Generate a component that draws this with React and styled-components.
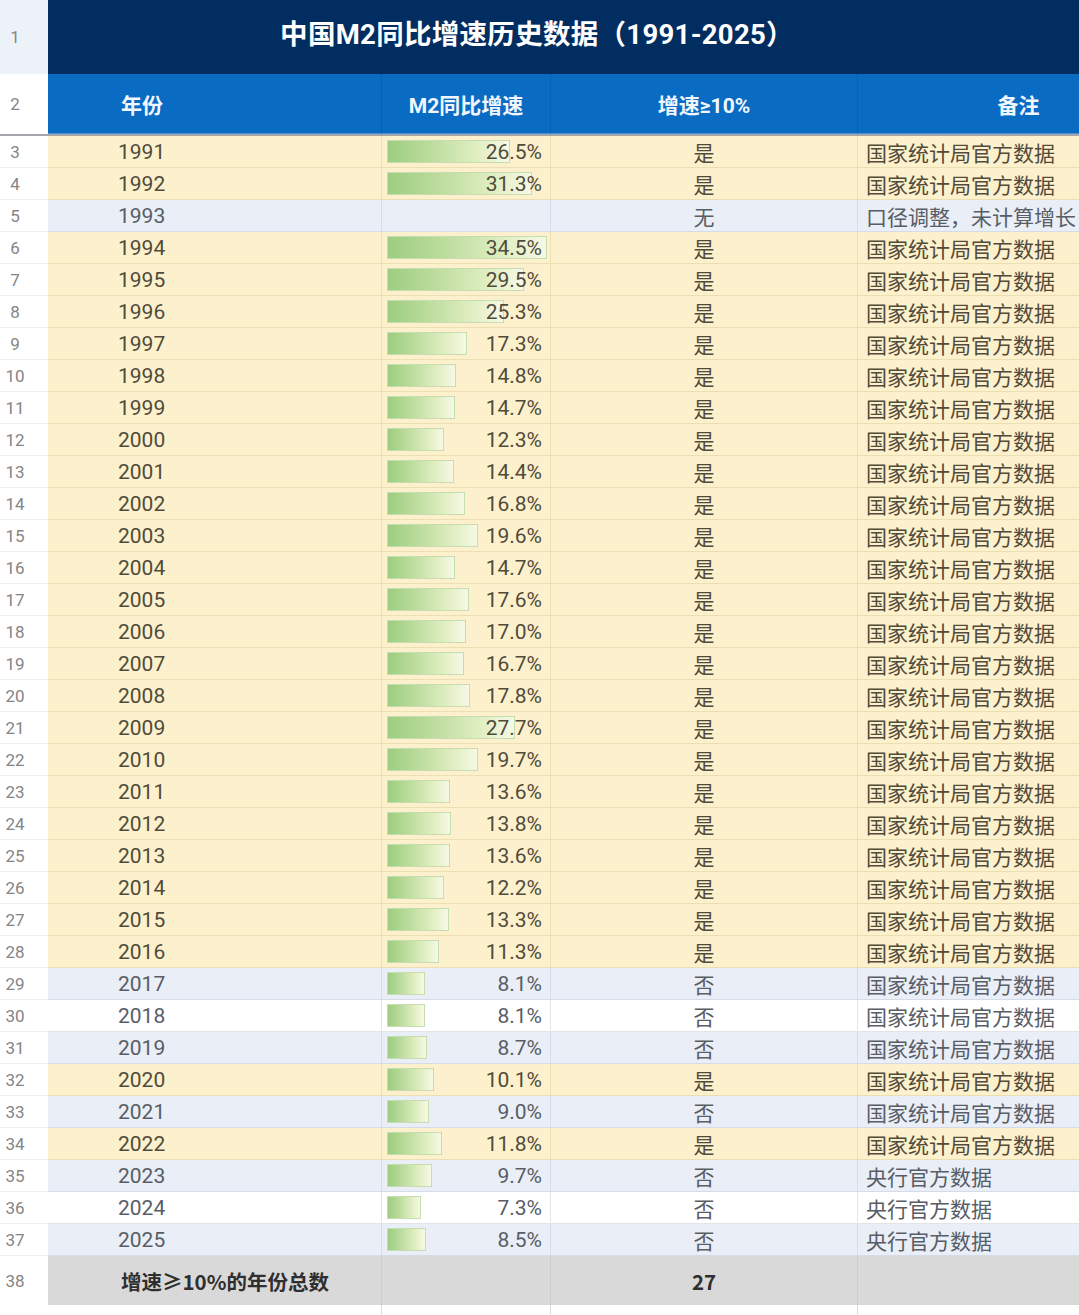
import React from 'react'
import styled, { createGlobalStyle } from 'styled-components'

const GlobalStyle = createGlobalStyle`
  html, body { margin: 0; padding: 0; background: #fff; }
  body {
    font-family: Roboto, "Noto Sans CJK SC", sans-serif;
    overflow: hidden;
  }
  * { box-sizing: border-box; }
`

const NBS = '国家统计局官方数据'
const PBC = '央行官方数据'

const rows = [
  [1991, 26.5], [1992, 31.3], [1993, null, '无', '口径调整，未计算增长'],
  [1994, 34.5], [1995, 29.5], [1996, 25.3], [1997, 17.3], [1998, 14.8],
  [1999, 14.7], [2000, 12.3], [2001, 14.4], [2002, 16.8], [2003, 19.6],
  [2004, 14.7], [2005, 17.6], [2006, 17.0], [2007, 16.7], [2008, 17.8],
  [2009, 27.7], [2010, 19.7], [2011, 13.6], [2012, 13.8], [2013, 13.6],
  [2014, 12.2], [2015, 13.3], [2016, 11.3], [2017, 8.1], [2018, 8.1],
  [2019, 8.7], [2020, 10.1], [2021, 9.0], [2022, 11.8],
  [2023, 9.7, null, PBC], [2024, 7.3, null, PBC], [2025, 8.5, null, PBC],
]

const MAX = 34.5
const BAR_MAX = 160

const tones = {
  yes: { bg: '#fdf1cd', line: '#eddfb4', text: '#504b3b' },
  blue: { bg: '#e9eef7', line: '#d5dce7', text: '#585d66' },
  white: { bg: '#ffffff', line: '#e2e4e8', text: '#585d66' },
}

const COLS = '48px 334px 169px 307px 322px'

const Sheet = styled.div`
  width: 1079px;
  height: 1315px;
  overflow: hidden;
  background: #fff;
`

const Row = styled.div`
  display: grid;
  grid-template-columns: ${COLS};
  width: 1180px;
  height: ${p => p.$h}px;
`

const RowNum = styled.div`
  display: flex;
  align-items: center;
  justify-content: center;
  padding-right: 18px;
  font-size: 17px;
  color: #858585;
  background: ${p => p.$bg || '#fff'};
  border-bottom: ${p => p.$line ? `1px solid ${p.$line}` : 'none'};
`

const TitleCell = styled.div`
  grid-column: 2 / -1;
  display: flex;
  align-items: center;
  justify-content: center;
  padding: 0 154px 10px 0;
  background: #022d61;
  color: #fff;
  font-size: 27.5px;
  font-weight: 700;
  letter-spacing: 0.3px;
`

const HeadRow = styled(Row)`
  border-bottom: 2px solid #a3a7ad;
`

const HeadCell = styled.div`
  display: flex;
  align-items: center;
  justify-content: ${p => p.$left ? 'flex-start' : 'center'};
  padding-left: ${p => p.$left ? '73px' : '0'};
  background: #0a6bc3;
  border-right: 1px solid #0a60b0;
  border-bottom: 1px solid #4a90d4;
  color: #f2f7ff;
  font-size: 21px;
  font-weight: 700;
`

const Cell = styled.div`
  position: relative;
  display: flex;
  align-items: center;
  justify-content: ${p => p.$align === 'center' ? 'center' : p.$align === 'right' ? 'flex-end' : 'flex-start'};
  padding: 0 ${p => p.$pr || 0}px 0 ${p => p.$pl || 0}px;
  background: ${p => p.$tone.bg};
  border-right: 1px solid ${p => p.$tone.line};
  border-bottom: 1px solid ${p => p.$tone.line};
  color: ${p => p.$tone.text};
  font-size: 21px;
  white-space: nowrap;
  overflow: hidden;
`

const Note = styled.span`
  font-family: "Noto Sans CJK SC", sans-serif;
  font-size: 21px;
`

const Bar = styled.div`
  position: absolute;
  left: 5px;
  top: 4px;
  bottom: 4px;
  background: linear-gradient(to right, #9dcd80 0%, #bcdc9d 35%, #e2efc4 75%, #f6f9e6 100%);
  border: 1px solid #c6ddb0;
`

const Value = styled.span`
  position: relative;
  z-index: 1;
`

const TotalCell = styled.div`
  display: flex;
  align-items: center;
  justify-content: ${p => p.$center ? 'center' : 'flex-start'};
  padding-left: ${p => p.$center ? '0' : '73px'};
  background: #d9d9d9;
  border-right: 1px solid #cdcdcd;
  color: #2f2f2f;
  font-family: "Noto Sans CJK SC", sans-serif;
  font-size: 20.5px;
  font-weight: 700;
`

const TailCell = styled.div`
  background: #fff;
  border-right: 1px solid #dcdcdc;
`

const DataRow = ({ num, year, value, flag, note }) => {
  const f = flag || (value >= 10 ? '是' : '否')
  const tone = f === '是' ? tones.yes : num % 2 === 1 ? tones.blue : tones.white
  return (
    <Row $h={32}>
      <RowNum $line="#eceef1">{num}</RowNum>
      <Cell $tone={tone} $pl={70}>{year}</Cell>
      <Cell $tone={tone} $align="right" $pr={8}>
        {value != null && <Bar style={{ width: `${(value / MAX) * BAR_MAX}px` }} />}
        {value != null && <Value>{value.toFixed(1)}%</Value>}
      </Cell>
      <Cell $tone={tone} $align="center"><Note>{f}</Note></Cell>
      <Cell $tone={tone} $pl={8}><Note>{note || NBS}</Note></Cell>
    </Row>
  )
}

export default function App() {
  const count = rows.filter(r => r[1] >= 10).length
  return (
    <>
      <GlobalStyle />
      <Sheet>
        <Row $h={74}>
          <RowNum $bg="#edf2f8">1</RowNum>
          <TitleCell>中国M2同比增速历史数据（1991-2025）</TitleCell>
        </Row>
        <HeadRow $h={62}>
          <RowNum>2</RowNum>
          <HeadCell $left>年份</HeadCell>
          <HeadCell>M2同比增速</HeadCell>
          <HeadCell>增速≥10%</HeadCell>
          <HeadCell>备注</HeadCell>
        </HeadRow>
        {rows.map(([year, value, flag, note], i) => (
          <DataRow key={year} num={i + 3} year={year} value={value} flag={flag} note={note} />
        ))}
        <Row $h={49}>
          <RowNum>38</RowNum>
          <TotalCell>增速≥10%的年份总数</TotalCell>
          <TotalCell />
          <TotalCell $center>{count}</TotalCell>
          <TotalCell />
        </Row>
        <Row $h={30}>
          <RowNum />
          <TailCell />
          <TailCell />
          <TailCell />
          <TailCell />
        </Row>
      </Sheet>
    </>
  )
}
